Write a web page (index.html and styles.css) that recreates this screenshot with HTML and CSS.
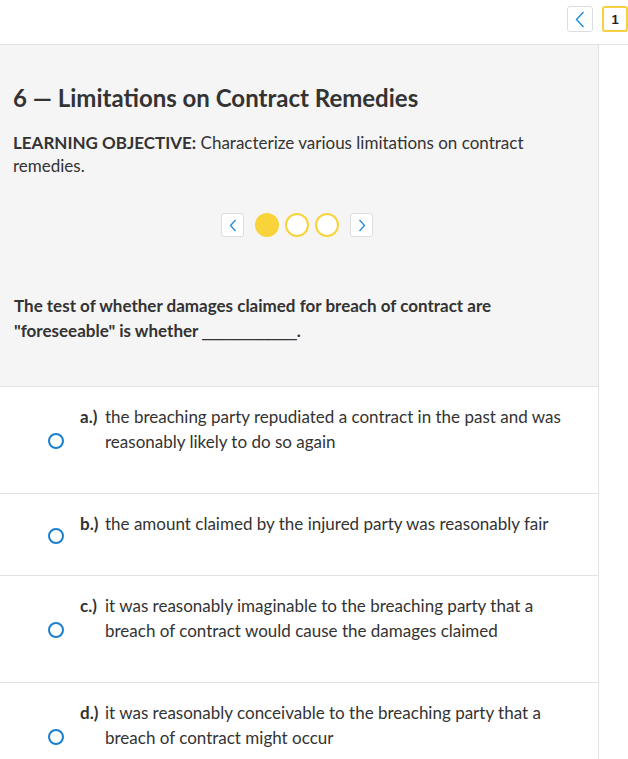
FILE: index.html
```html
<!DOCTYPE html>
<html lang="en">
<head>
<meta charset="utf-8">
<title>Limitations on Contract Remedies</title>
<link rel="stylesheet" href="styles.css">
</head>
<body>
<header class="topbar">
  <button class="top-btn back" aria-label="Previous">
    <svg width="10" height="17" viewBox="0 0 10 17"><path d="M8.5 1 L1.5 8.5 L8.5 16" fill="none" stroke="#1f8ad6" stroke-width="1.4"/></svg>
  </button>
  <div class="top-btn page">1</div>
</header>
<main class="column">
  <section class="intro">
    <h1 class="title">6 — Limitations on Contract Remedies</h1>
    <p class="objective"><strong>LEARNING OBJECTIVE:</strong> Characterize various limitations on contract remedies.</p>
    <div class="carousel">
      <button class="nav-btn prev" aria-label="Previous">
        <svg width="8" height="13" viewBox="0 0 8 13"><path d="M6.5 1 L1.5 6.5 L6.5 12" fill="none" stroke="#1f8ad6" stroke-width="1.3"/></svg>
      </button>
      <span class="dot filled"></span>
      <span class="dot"></span>
      <span class="dot"></span>
      <button class="nav-btn next" aria-label="Next">
        <svg width="8" height="13" viewBox="0 0 8 13"><path d="M1.5 1 L6.5 6.5 L1.5 12" fill="none" stroke="#1f8ad6" stroke-width="1.3"/></svg>
      </button>
    </div>
    <p class="question">The test of whether damages claimed for breach of contract are "foreseeable" is whether <span class="blank">__________</span>.</p>
  </section>
  <ul class="options">
    <li class="option">
      <span class="radio-cell"><span class="radio"></span></span>
      <span class="label">a.)</span>
      <span class="text">the breaching party repudiated a contract in the past and was reasonably likely to do so again</span>
    </li>
    <li class="option">
      <span class="radio-cell"><span class="radio"></span></span>
      <span class="label">b.)</span>
      <span class="text">the amount claimed by the injured party was reasonably fair</span>
    </li>
    <li class="option">
      <span class="radio-cell"><span class="radio"></span></span>
      <span class="label">c.)</span>
      <span class="text">it was reasonably imaginable to the breaching party that a breach of contract would cause the damages claimed</span>
    </li>
    <li class="option">
      <span class="radio-cell"><span class="radio"></span></span>
      <span class="label">d.)</span>
      <span class="text">it was reasonably conceivable to the breaching party that a breach of contract might occur</span>
    </li>
  </ul>
</main>
</body>
</html>
```
FILE: styles.css
```css
* { box-sizing: border-box; }
html, body { margin: 0; padding: 0; background: #fff; }
body {
  font-family: Lato, "Noto Sans", sans-serif;
  color: #333;
  width: 628px;
  overflow: hidden;
}
.topbar {
  height: 45px;
  border-bottom: 1px solid #e2e2e6;
  display: flex;
  justify-content: flex-end;
  align-items: flex-start;
  padding-top: 6px;
  gap: 9px;
}
.top-btn {
  width: 26px;
  height: 26px;
  border-radius: 3px;
  background: #fff;
  display: flex;
  align-items: center;
  justify-content: center;
  padding: 0;
  margin: 0;
}
.back { border: 1.5px solid #dcdde2; }
.page {
  border: 2px solid #f5d142;
  font-weight: 700;
  font-size: 13px;
  color: #222;
  font-family: "Liberation Sans", Arial, sans-serif;
}
.column {
  width: 599px;
  border-right: 1px solid #e2e2e6;
}
.intro {
  background: #f5f5f5;
  border-bottom: 1px solid #e2e2e6;
  padding: 38px 13px 43px 13px;
}
.title {
  margin: 0;
  font-size: 24px;
  line-height: 30px;
  font-weight: 700;
  color: #333;
}
.objective {
  margin: 18px 0 0 0;
  font-size: 17px;
  line-height: 23px;
  padding-right: 10px;
}
.objective strong { font-weight: 700; }
.carousel {
  margin-top: 36px;
  display: flex;
  justify-content: center;
  align-items: center;
  gap: 6px;
  height: 24px;
  padding-right: 4px;
}
.nav-btn {
  width: 23px;
  height: 24px;
  border: 1.5px solid #dcdde2;
  border-radius: 3px;
  background: #fff;
  padding: 0;
  display: flex;
  align-items: center;
  justify-content: center;
}
.nav-btn.prev { margin-right: 5px; }
.nav-btn.next { margin-left: 5px; }
.dot {
  width: 24px;
  height: 24px;
  border-radius: 50%;
  border: 2.5px solid #f8d43a;
  background: #fff;
}
.dot.filled { background: #f8d43a; }
.question {
  margin: 56px 0 0 1px;
  font-size: 17px;
  line-height: 25px;
  font-weight: 700;
  padding-right: 70px;
}
.blank {
  font-family: "Liberation Sans", Arial, sans-serif;
  font-weight: 400;
  line-height: 1;
}
.options {
  list-style: none;
  margin: 0;
  padding: 0;
}
.option {
  display: flex;
  align-items: flex-start;
  border-bottom: 1px solid #e2e2e6;
  padding: 17px 20px 39px 0;
  font-size: 17px;
  line-height: 25px;
}
.radio-cell {
  align-self: stretch;
  display: flex;
  align-items: center;
  padding-left: 48px;
  width: 80px;
  flex: none;
  margin-top: 12px;
  margin-bottom: -12px;
}
.radio {
  width: 16px;
  height: 16px;
  border-radius: 50%;
  border: 2px solid #1b7fcf;
  background: #fff;
}
.label {
  width: 25px;
  font-weight: 700;
  flex: none;
}
.text { flex: 1; }
```
